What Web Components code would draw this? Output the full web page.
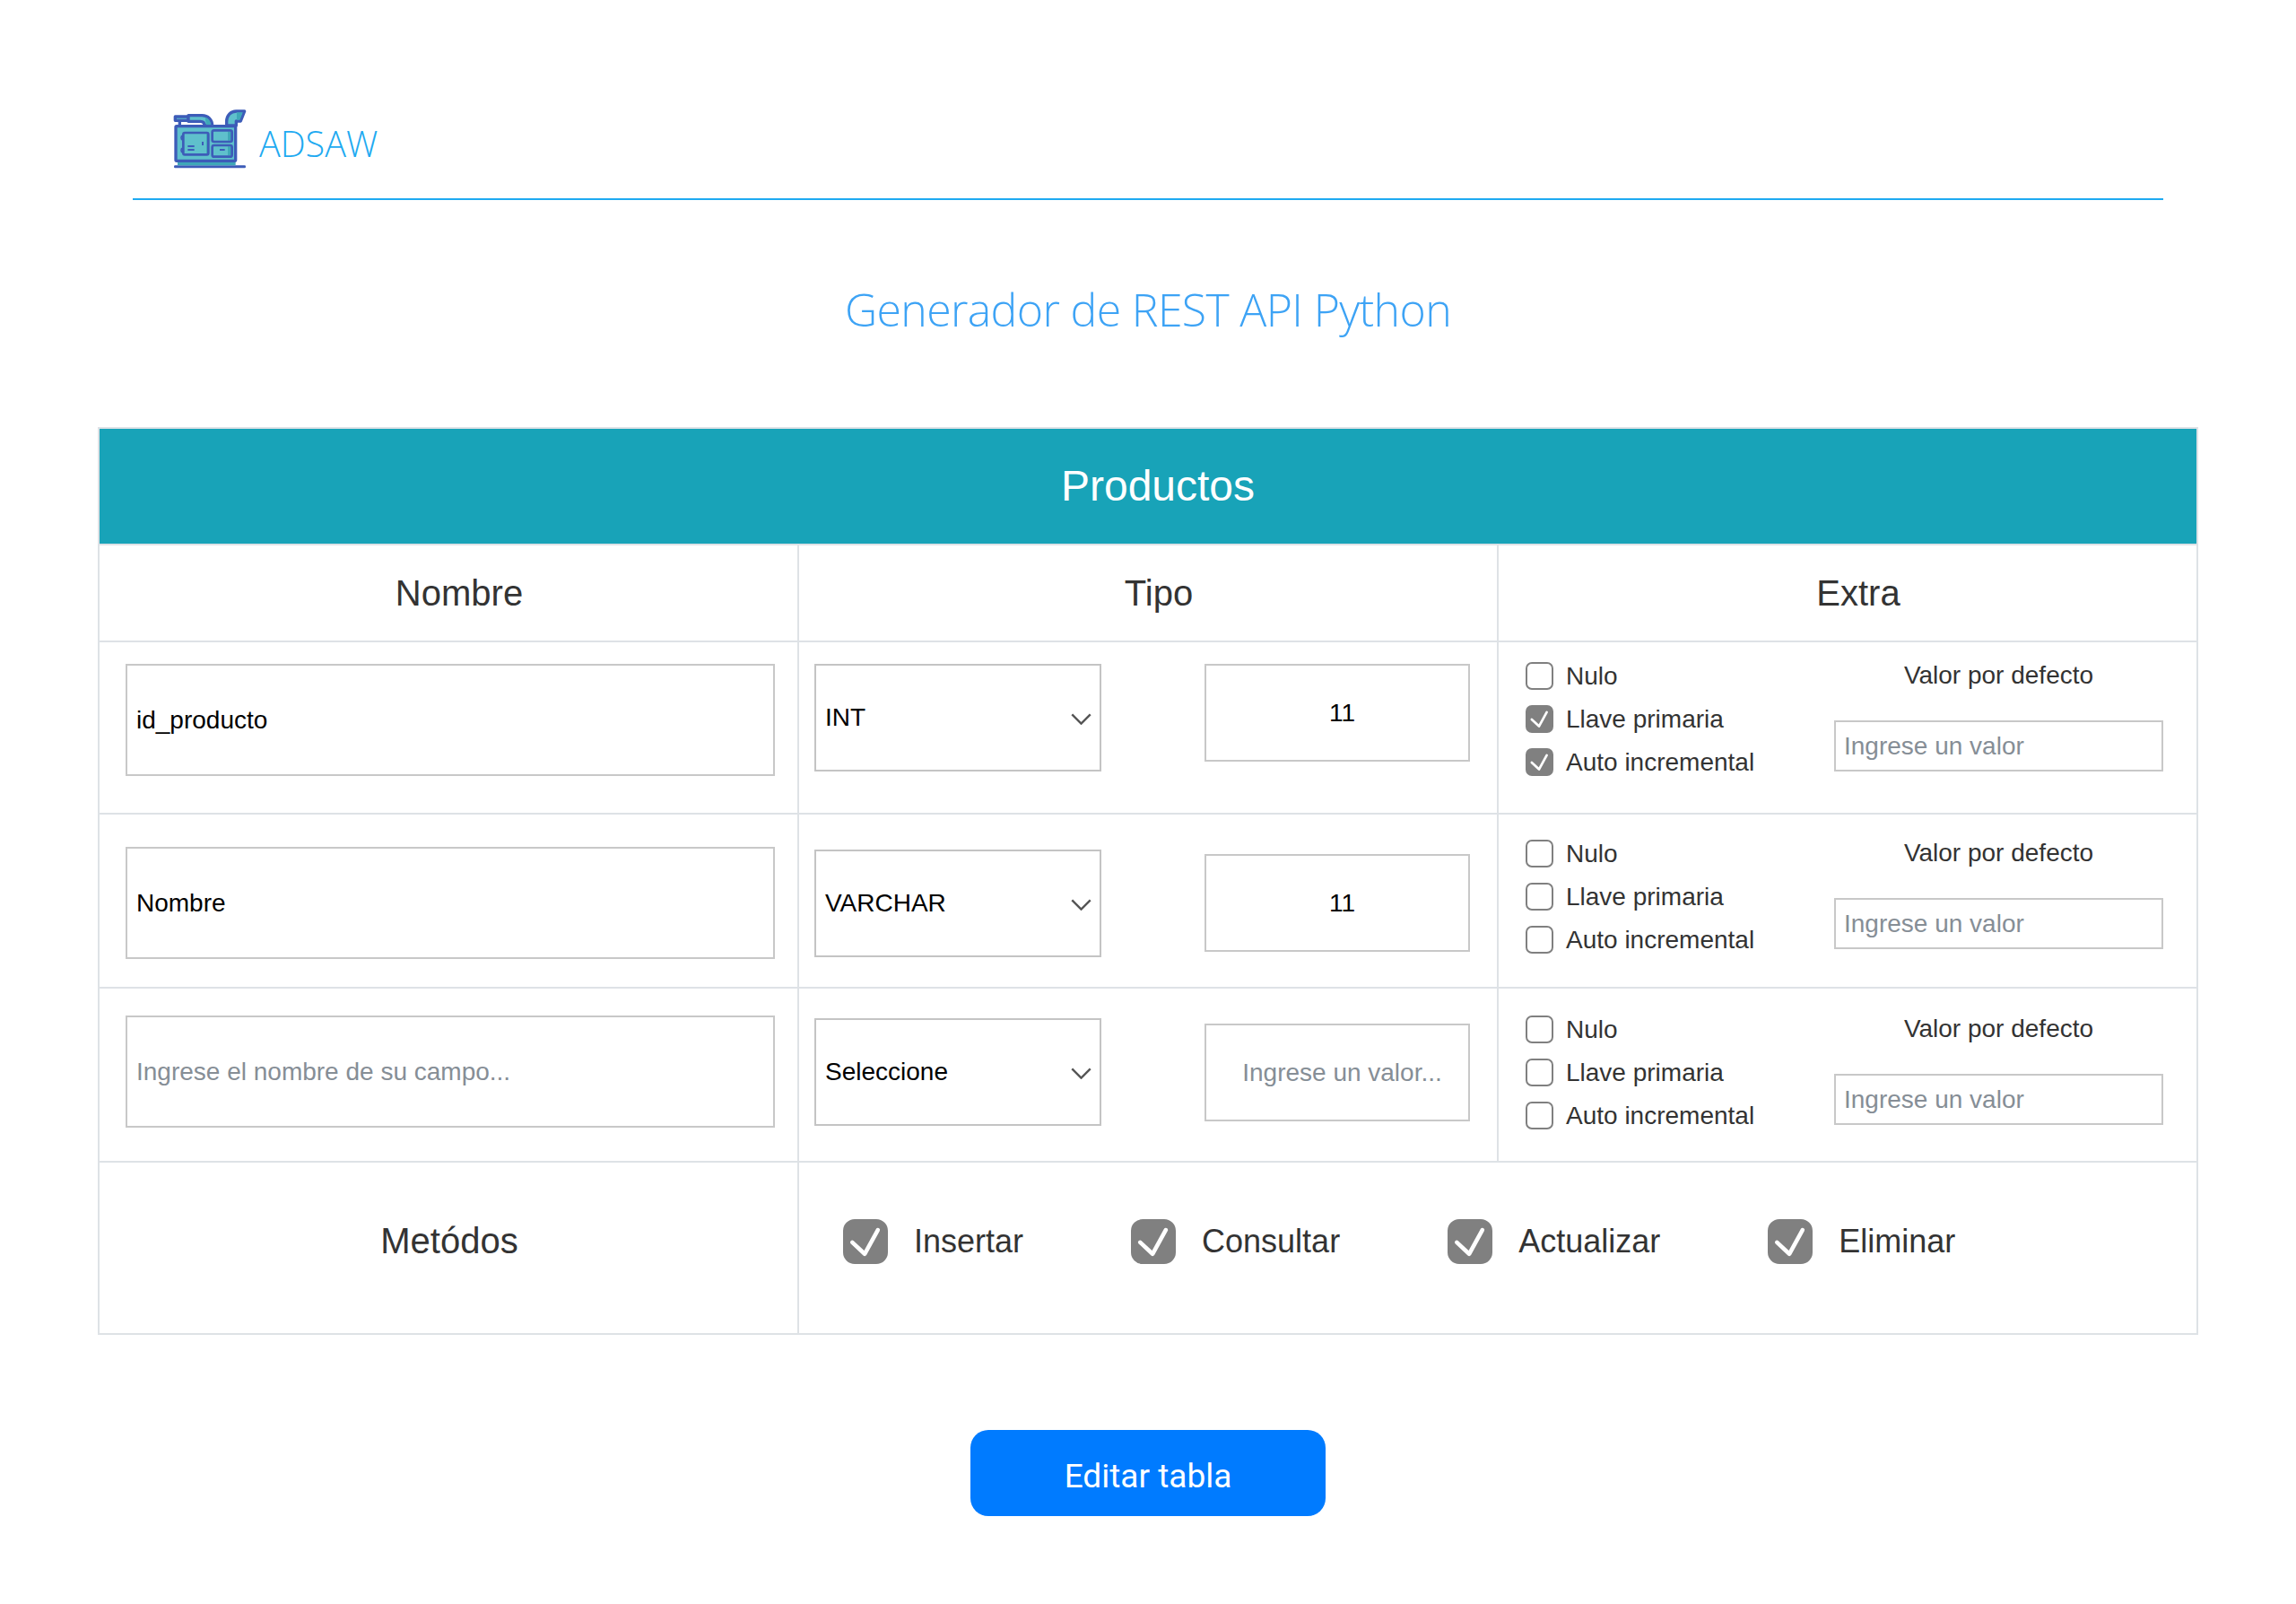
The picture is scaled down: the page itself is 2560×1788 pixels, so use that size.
<!DOCTYPE html>
<html lang="es">
<head>
<meta charset="utf-8">
<title>ADSAW</title>
<style>
  html, body { margin: 0; background: #fff; }
  body { font-family: "Liberation Sans", Arial, sans-serif; }
</style>
</head>
<body>
<app-page>
  <app-brand slot="brand">ADSAW</app-brand>
  <page-title slot="title">Generador de REST API Python</page-title>
  <table-card slot="table" heading="Productos">
    <field-row name="id_producto" type="INT" size="11" checks="0,1,1" tops="24,24,24,22,87"></field-row>
    <field-row name="Nombre" type="VARCHAR" size="11" checks="0,0,0" tops="36,39,44,28,93"></field-row>
    <field-row type="Seleccione" checks="0,0,0" tops="30,33,39,30,95"></field-row>
    <method-row>
      <tick-box big checked>Insertar</tick-box>
      <tick-box big checked>Consultar</tick-box>
      <tick-box big checked>Actualizar</tick-box>
      <tick-box big checked>Eliminar</tick-box>
    </method-row>
  </table-card>
  <app-button slot="action">Editar tabla</app-button>
</app-page>

<script>
// small helper so each element below stays short
const shadow = (el, html) => { el.attachShadow({ mode: "open" }).innerHTML = html; };

class AppPage extends HTMLElement {
  constructor() {
    super();
    shadow(this, `
      <style>
        :host { display: block; height: 1788px; padding: 0 109px; box-sizing: border-box; }
        .title { height: 253px; display: flex; align-items: center; justify-content: center; padding-bottom: 9px; box-sizing: border-box; }
        .action { display: flex; justify-content: center; margin-top: 106px; }
      </style>
      <slot name="brand"></slot>
      <div class="title"><slot name="title"></slot></div>
      <slot name="table"></slot>
      <div class="action"><slot name="action"></slot></div>`);
  }
}

class AppBrand extends HTMLElement {
  constructor() {
    super();
    shadow(this, `
      <style>
        :host { display: flex; height: 223px; margin: 0 39px; padding: 110px 0 0 32px; box-sizing: border-box; border-bottom: 2px solid #1eaaf1; }
        svg { display: block; width: 100px; height: 80px; }
        .name { margin: 16px 0 0 9px; font: 300 39.5px/68px "Open Sans", sans-serif; color: #1eaaf1; }
      </style>
      <svg viewBox="0 0 300 240" fill="#5fc0cc" stroke="#3d5cb8" stroke-width="10" stroke-linejoin="round">
        <rect x="42" y="223" width="240" height="9" rx="4" fill="#3d5cb8" stroke="none"/>
        <rect x="54" y="206" width="194" height="17" fill="#3fa8b8" stroke="none"/>
        <path d="M61 76v16" fill="none"/>
        <path d="M218 90v-14c0-20 14-34 32-34h28l-13 33h-15v15z"/>
        <path d="M252 46h20l-10 25h-10z" fill="#3fa8b8" stroke="none"/>
        <path d="M46 60h44v13H46z"/>
        <path d="M90 56h46c20 0 34 14 34 34h-26c0-9-4-14-14-14H90z"/>
        <path d="M146 62c12 4 18 14 20 26h-16z" fill="#3fa8b8" stroke="none"/>
        <rect x="48" y="92" width="200" height="116" rx="3"/>
        <path d="M222 110h14v30h-14zM222 160h14v30h-14zM150 118h6v66h-6z" fill="#3fa8b8" stroke="none"/>
        <path d="M72 122a9 9 0 0 0 0 17M72 164a9 9 0 0 0 0 17" fill="none" stroke-width="5"/>
        <rect x="73" y="114" width="84" height="73" rx="5" stroke-width="8" fill="none"/>
        <rect x="170" y="106" width="66" height="38" rx="6" fill="none" stroke-width="8"/>
        <rect x="170" y="156" width="66" height="38" rx="6" fill="none" stroke-width="8"/>
        <path d="M88 159h22M88 171h22M138 144v12M195 171h17" fill="none" stroke-width="6"/>
      </svg>
      <div class="name"><slot></slot></div>`);
  }
}

class PageTitle extends HTMLElement {
  constructor() {
    super();
    shadow(this, `
      <style>:host { display: block; font: 300 50px/70px "Open Sans", sans-serif; letter-spacing: -0.65px; color: #3da3f5; }</style>
      <slot></slot>`);
  }
}

class TableCard extends HTMLElement {
  constructor() {
    super();
    shadow(this, `
      <style>
        :host { display: block; border: 2px solid #dee2e6; color: #333; }
        .banner { height: 130px; padding: 0 0 2px 22px; box-sizing: border-box; display: flex; align-items: center; justify-content: center; background: #18a3b8; color: #fff; font-size: 48px; border-bottom: 2px solid #dee2e6; }
        .heads { display: grid; grid-template-columns: 780px 780px 1fr; height: 108px; box-sizing: border-box; border-bottom: 2px solid #dee2e6; font-size: 40px; }
        .heads div { display: flex; align-items: center; justify-content: center; padding-left: 24px; border-right: 2px solid #dee2e6; }
        .heads div:last-child { border-right: 0; }
      </style>
      <div class="banner"></div>
      <div class="heads"><div>Nombre</div><div>Tipo</div><div>Extra</div></div>
      <slot></slot>`);
    this.shadowRoot.querySelector(".banner").textContent = this.getAttribute("heading");
  }
}

class FieldRow extends HTMLElement {
  constructor() {
    super();
    const [nameTop, typeTop, sizeTop, checkTop, valueTop] = this.getAttribute("tops").split(",");
    const checks = this.getAttribute("checks").split(",");
    const labels = ["Nulo", "Llave primaria", "Auto incremental"];
    const name = this.getAttribute("name");
    const size = this.getAttribute("size");
    shadow(this, `
      <style>
        :host { display: grid; grid-template-columns: 780px 780px 1fr; box-sizing: border-box; border-bottom: 2px solid #dee2e6; }
        :host(:nth-of-type(1)) { height: 192px; }
        :host(:nth-of-type(n+2)) { height: 194px; }
        .name, .type, .extra { box-sizing: border-box; }
        .name { padding-left: 29px; border-right: 2px solid #dee2e6; }
        .type { display: flex; justify-content: space-between; align-items: flex-start; padding: 0 30px 0 17px; border-right: 2px solid #dee2e6; }
        .extra { display: flex; justify-content: space-between; align-items: flex-start; padding: 0 37px 0 30px; }
        .checks { display: flex; flex-direction: column; gap: 17px; }
        .value { width: 367px; }
        .value p { height: 32px; margin: 0; font-size: 28px; line-height: 32px; text-align: center; }
      </style>
      <div class="name" style="padding-top:${nameTop}px">
        <text-box wide ${name ? `value="${name}"` : 'placeholder="Ingrese el nombre de su campo..."'} style="width:724px;height:125px"></text-box>
      </div>
      <div class="type">
        <select-box style="margin-top:${typeTop}px">${this.getAttribute("type")}</select-box>
        <text-box center ${size ? `value="${size}"` : 'placeholder="Ingrese un valor..."'} style="margin-top:${sizeTop}px;width:296px;height:109px"></text-box>
      </div>
      <div class="extra">
        <div class="checks" style="padding-top:${checkTop}px">
          ${labels.map((l, i) => `<tick-box ${checks[i] === "1" ? "checked" : ""}>${l}</tick-box>`).join("")}
        </div>
        <div class="value" style="padding-top:${checkTop - 1}px">
          <p>Valor por defecto</p>
          <text-box placeholder="Ingrese un valor" style="height:57px;margin-top:${valueTop - checkTop - 31}px"></text-box>
        </div>
      </div>`);
  }
}

class TextBox extends HTMLElement {
  constructor() {
    super();
    const value = this.getAttribute("value");
    shadow(this, `
      <style>
        :host { display: flex; align-items: center; box-sizing: border-box; padding: 0 9px; border: 2px solid #c8c8c8; font-size: 28px; color: #000; background: #fff; white-space: nowrap; }
        :host([wide]) { padding: 0 10px; }
        :host([center]) { justify-content: center; padding-left: 20px; }
        .hint { color: #868e96; }
      </style>
      <span class="${value === null ? "hint" : ""}"></span>`);
    this.shadowRoot.querySelector("span").textContent = value === null ? this.getAttribute("placeholder") : value;
  }
}

class SelectBox extends HTMLElement {
  constructor() {
    super();
    shadow(this, `
      <style>
        :host { display: flex; align-items: center; justify-content: space-between; box-sizing: border-box; width: 320px; height: 120px; padding: 0 9px 0 10px; border: 2px solid #c4c4c4; font-size: 28px; color: #000; }
        svg { width: 23px; height: 13px; margin-top: 2px; }
      </style>
      <span><slot></slot></span>
      <svg viewBox="0 0 24 14" fill="none" stroke="#555" stroke-width="2.6"><path d="M1 1.5l11 11 11-11"/></svg>`);
  }
}

class TickBox extends HTMLElement {
  constructor() {
    super();
    shadow(this, `
      <style>
        :host { display: flex; align-items: center; gap: 14px; font-size: 28px; line-height: 31px; color: #333; }
        :host([big]) { gap: 29px; font-size: 36px; line-height: 50px; }
        .box { width: 31px; height: 31px; box-sizing: border-box; border: 2px solid #808080; border-radius: 7px; background: #fff; }
        :host([big]) .box { width: 50px; height: 50px; border-radius: 13px; }
        :host([checked]) .box { background: #808080; }
        svg { display: none; width: 100%; height: 100%; }
        :host([checked]) svg { display: block; }
      </style>
      <div class="box"><svg viewBox="0 0 50 50" fill="none" stroke="#fff" stroke-width="5" stroke-linecap="round" stroke-linejoin="round"><path d="M9 26l15 14 16-29"/></svg></div>
      <span><slot></slot></span>`);
  }
}

class MethodRow extends HTMLElement {
  constructor() {
    super();
    shadow(this, `
      <style>
        :host { display: grid; grid-template-columns: 780px 1fr; height: 190px; }
        .label { display: flex; justify-content: center; padding: 59px 0 0 2px; box-sizing: border-box; border-right: 2px solid #dee2e6; font-size: 40px; line-height: 56px; color: #333; }
        .items { display: flex; gap: 120px; align-items: flex-start; padding: 63px 0 0 49px; }
      </style>
      <div class="label">Metódos</div>
      <div class="items"><slot></slot></div>`);
  }
}

class AppButton extends HTMLElement {
  constructor() {
    super();
    shadow(this, `
      <style>
        :host { display: flex; align-items: center; justify-content: center; width: 396px; height: 96px; padding-top: 6px; box-sizing: border-box; border-radius: 20px; background: #007bff; color: #fff; font: 400 37px Roboto, sans-serif; }
      </style>
      <slot></slot>`);
  }
}

customElements.define("app-page", AppPage);
customElements.define("app-brand", AppBrand);
customElements.define("page-title", PageTitle);
customElements.define("table-card", TableCard);
customElements.define("field-row", FieldRow);
customElements.define("text-box", TextBox);
customElements.define("select-box", SelectBox);
customElements.define("tick-box", TickBox);
customElements.define("method-row", MethodRow);
customElements.define("app-button", AppButton);
</script>
</body>
</html>
